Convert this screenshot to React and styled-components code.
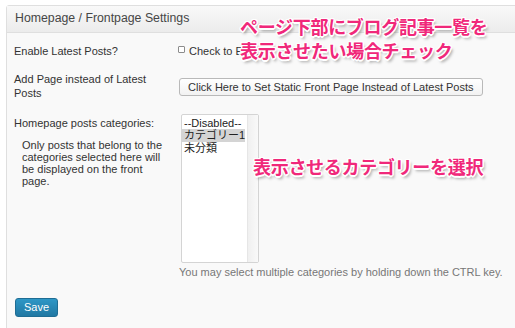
import React from "react";
import styled, { createGlobalStyle } from "styled-components";

const GlobalStyle = createGlobalStyle`
  html, body { margin: 0; padding: 0; background: #ffffff; overflow: hidden; }
  body { font-family: "Liberation Sans", "Noto Sans CJK JP", sans-serif; }
`;

const Stage = styled.div`
  position: relative;
  width: 515px;
  height: 328px;
  overflow: hidden;
  padding-top: 5px;
  padding-left: 6px;
  box-sizing: border-box;
`;

const Panel = styled.div`
  width: 540px;
  border: 1px solid #dfdfdf;
  border-radius: 3px 0 0 0;
  background: #f9f9f9;
`;

const PanelHeader = styled.div`
  height: 26px;
  line-height: 25px;
  padding-left: 8px;
  font-size: 12.3px;
  color: #464646;
  background: linear-gradient(#f9f9f9, #ececec);
  border-bottom: 1px solid #dfdfdf;
`;

const PanelBody = styled.div`
  padding: 0 0 30px 0;
`;

const FieldRow = styled.div`
  display: grid;
  grid-template-columns: 164px 1fr;
  padding-left: 7px;
  margin-top: ${(p) => p.$gap}px;
`;

const Label = styled.div`
  font-size: 11px;
  line-height: 14px;
  color: #333;
  padding-right: 10px;
  padding-top: ${(p) => p.$pad || 0}px;
`;

const Description = styled.div`
  margin: 9px 0 0 8px;
  width: 146px;
  font-size: 11px;
  line-height: 12px;
  color: #333;
`;

const Field = styled.div`
  display: flex;
  flex-direction: column;
  align-items: flex-start;
`;

const CheckLabel = styled.label`
  display: flex;
  align-items: flex-start;
  gap: 4px;
  font-size: 11px;
  line-height: 14px;
  color: #333;
`;

const CheckBox = styled.span`
  width: 5px;
  height: 5px;
  margin-top: 2px;
  border: 1px solid #8c8c8c;
  border-radius: 1px;
  background: #fff;
`;

const Button = styled.button`
  margin: 6px 0 0 1px;
  height: 18px;
  padding: 0 8px;
  border: 1px solid #b9b9b9;
  border-radius: 3px;
  background: linear-gradient(#ffffff, #f2f2f2);
  font-family: "Liberation Sans", sans-serif;
  font-size: 11px;
  line-height: 16px;
  color: #333;
  white-space: nowrap;
`;

const Listbox = styled.div`
  display: flex;
  margin-left: 3px;
  width: 78px;
  height: 149px;
  box-sizing: border-box;
  border: 1px solid #d4d4d4;
  border-radius: 2px;
  background: #fff;
`;

const OptionList = styled.div`
  flex: 1;
  padding: 2px 2px 0 0;
`;

const Option = styled.div`
  padding-left: 2px;
  font-size: 11px;
  line-height: 12.3px;
  color: #222;
  background: ${(p) => (p.$selected ? "#d4d4d4" : "transparent")};
  white-space: nowrap;
`;

const ScrollTrack = styled.div`
  width: 10px;
  border-left: 1px solid #e6e6e6;
  background: linear-gradient(to right, #f0f0f0, #f9f9f9);
`;

const Hint = styled.div`
  margin: 2px 0 0 1px;
  font-size: 11px;
  line-height: 14px;
  color: #777;
  white-space: nowrap;
`;

const SaveRow = styled.div`
  margin-top: 18px;
  padding-left: 8px;
`;

const SaveButton = styled.button`
  height: 19px;
  padding: 0 8px;
  border: 1px solid #1f6d94;
  border-radius: 3px;
  background: linear-gradient(#2e97c6, #2178a3);
  font-family: "Liberation Sans", sans-serif;
  font-size: 11px;
  line-height: 17px;
  color: #fff;
`;

const Note = styled.div`
  position: absolute;
  left: ${(p) => p.$x}px;
  top: ${(p) => p.$y}px;
  font-family: "Noto Sans CJK JP", sans-serif;
  font-weight: 700;
  font-size: 18px;
  line-height: 24px;
  letter-spacing: -0.3px;
  color: #f0287a;
  white-space: nowrap;
  text-shadow: -1px -1px 0 #fff, 1px -1px 0 #fff, -1px 1px 0 #fff, 1px 1px 0 #fff,
    0 -1.5px 0 #fff, 0 1.5px 0 #fff, -1.5px 0 0 #fff, 1.5px 0 0 #fff,
    2px 3px 3px rgba(0, 0, 0, 0.35);
`;

export default function App() {
  return (
    <>
      <GlobalStyle />
      <Stage>
        <Panel>
          <PanelHeader>Homepage / Frontpage Settings</PanelHeader>
          <PanelBody>
            <FieldRow $gap={11}>
              <Label>Enable Latest Posts?</Label>
              <Field>
                <CheckLabel>
                  <CheckBox />
                  Check to Enable
                </CheckLabel>
              </Field>
            </FieldRow>
            <FieldRow $gap={14}>
              <Label>Add Page instead of Latest Posts</Label>
              <Field>
                <Button>Click Here to Set Static Front Page Instead of Latest Posts</Button>
              </Field>
            </FieldRow>
            <FieldRow $gap={14}>
              <div>
                <Label $pad={2}>Homepage posts categories:</Label>
                <Description>
                  Only posts that belong to the categories selected here will be
                  displayed on the front page.
                </Description>
              </div>
              <Field>
                <Listbox>
                  <OptionList>
                    <Option>--Disabled--</Option>
                    <Option $selected>カテゴリー1</Option>
                    <Option>未分類</Option>
                  </OptionList>
                  <ScrollTrack />
                </Listbox>
                <Hint>You may select multiple categories by holding down the CTRL key.</Hint>
              </Field>
            </FieldRow>
            <SaveRow>
              <SaveButton>Save</SaveButton>
            </SaveRow>
          </PanelBody>
        </Panel>
        <Note $x={240} $y={14}>
          ページ下部にブログ記事一覧を
          <br />
          表示させたい場合チェック
        </Note>
        <Note $x={253} $y={154}>表示させるカテゴリーを選択</Note>
      </Stage>
    </>
  );
}
